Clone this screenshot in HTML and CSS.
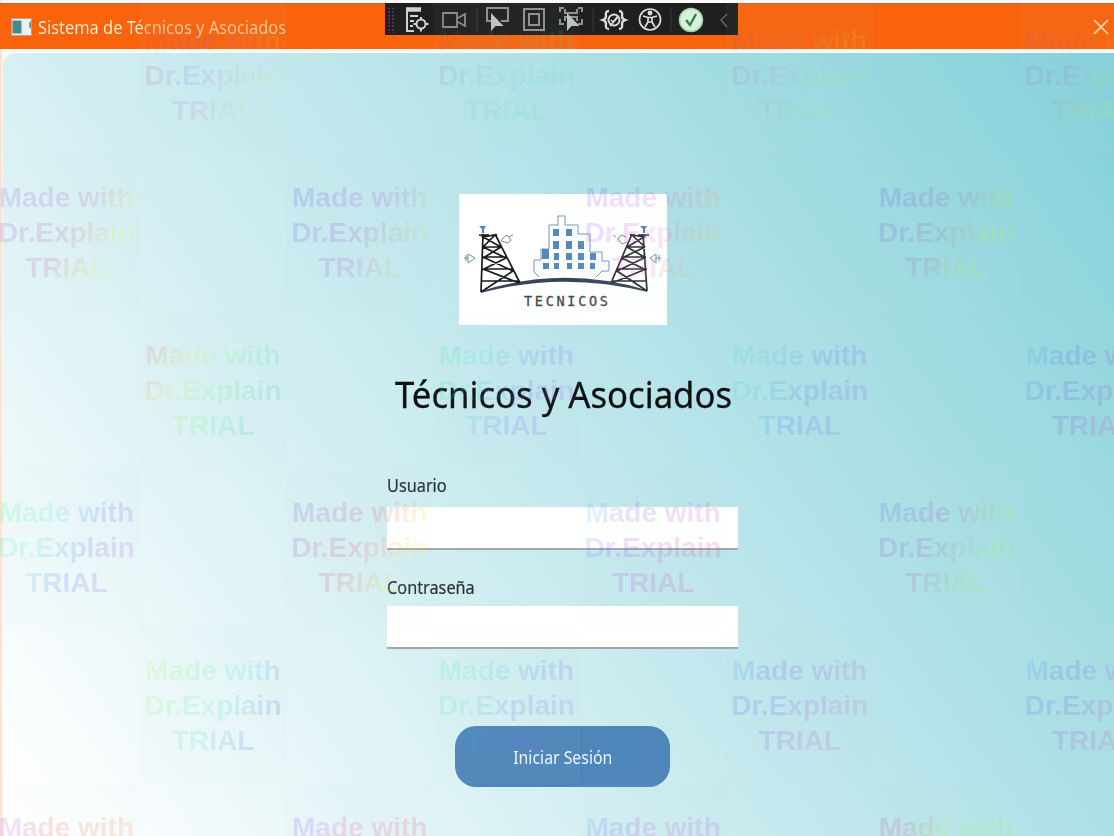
FILE: index.html
```html
<!DOCTYPE html>
<html lang="es">
<head>
<meta charset="utf-8">
<title>Sistema de Técnicos y Asociados</title>
<link rel="stylesheet" href="styles.css">
</head>
<body>
<div class="window">
  <header class="titlebar">
    <svg class="app-icon" width="21" height="18" viewBox="0 0 21 18">
      <rect x=".5" y=".5" width="20" height="17" fill="#eaf1f3" stroke="#b9a08c"/>
      <rect x="2" y="3" width="8" height="12" fill="#3d8f86" stroke="#6c7f8c"/>
      <path d="M20 3l-2 2v4l2 2z" fill="#5aa38c"/>
    </svg>
    <span class="title">Sistema de Técnicos y Asociados</span>
    <svg class="close" width="16" height="16" viewBox="0 0 16 16"><path d="M1 1l14 14M15 1L1 15" stroke="#ffdcb8" stroke-width="1.7"/></svg>
  </header>
  <main class="login">
    <svg class="logo" width="208" height="131" viewBox="0 0 208 131" fill="none">
      <rect width="208" height="131" fill="#fff"/>
      <path d="M80 83l-5-5V66h7V55h8V31h9V22h7v9h13v9h12v18h12v9h7v10h-7l-6 6" fill="#fbfdff" stroke="#7596c0"/>
      <g fill="#5588bb">
        <path d="M94 35h6v7h-6zM107 35h6v7h-6zM94 47h6v8h-6zM107 47h6v8h-6zM119 47h6v8h-6zM83 55h7v10h-7zM95 59h5v7h-5zM107 59h6v7h-6zM119 59h6v7h-6zM131 59h6v7h-6zM84 69h6v6h-6zM95 69h5v6h-5zM108 69h5v6h-5zM119 69h6v6h-6zM131 69h5v6h-5z"/>
      </g>
      <path d="M22 98Q104 72 188 97Q104 76 22 98z" fill="#39445c" stroke="#39445c" stroke-width="1.8"/>
      <g stroke="#17191d" stroke-width="1.7">
        <path d="M24 40L22 98M36 40L61 89M20 41h10M33 41h5M24 53h18M24 63h23M24 75h30M22 87h38M24 53L36 41L24 43L42 53L24 64M24 53l23 11L23 76M24 63l30 14L22 98M24 75l36 14"/>
        <path d="M184 40l4 57M173 40L152 89M179 41h11M171 41h5M168 53h18M163 63h24M158 75h30M154 87h34M186 53L173 41L185 43L168 53L187 64M186 53l-23 11 24 12M187 63l-29 14 30 20M187 75l-34 14" stroke="#2c2f33"/>
      </g>
      <g fill="#4d83b3"><path d="M20 32h7l-2 3v4h-2v-4zM181 32h7l-2 3v4h-2v-4z"/></g>
      <g stroke="#72909f"><path d="M44 44l4-3 4 5-3 3-7-2zM50 43l4-2M9 60l7 4-7 5zM5 64h4M7 61v6M167 43l-5-2-3 4 4 5 5-2M157 43l-3-2M197 60l-6 4 6 5zM197 64h5M200 61v6"/></g>
      <text class="logo-text" x="65" y="112" textLength="84">TECNICOS</text>
    </svg>
    <h1 class="heading"><span>Técnicos y Asociados</span></h1>
    <form class="form">
      <label class="label" for="user"><span>Usuario</span></label>
      <input class="field" id="user" type="text">
      <label class="label second" for="pass"><span>Contraseña</span></label>
      <input class="field" id="pass" type="password">
      <button class="submit" type="button"><span>Iniciar Sesión</span></button>
    </form>
  </main>
</div>

<div class="toolbar">
  <svg width="353" height="32" viewBox="0 0 353 32" fill="none">
    <path d="M4 5v25M8 5v25" stroke="#484848" stroke-width="2" stroke-dasharray="1.5 2"/>
    <g stroke="#d2d2d2" stroke-width="2">
      <path d="M21 6.500h15" stroke-width="4.500"/>
      <path d="M22 8v20h7M25 13h8M25 18h4M25 23h3"/>
      <circle cx="36" cy="21" r="4.500"/><path d="M36 14v3M36 25v3.500M28.500 21h3M40.500 21h3"/>
    </g>
    <g stroke="#898989" stroke-width="1.800"><path d="M58 10h14v14H58zM73 15l7-4v12l-7-4"/></g>
    <path d="M92 6v22M208 6v22M286 6v22" stroke="#3a3a3a"/>
    <g stroke="#8e8e8e" stroke-width="2">
      <path d="M107 18h-5V5h21v13h-7"/><path d="M106 10v18l4.500-5h8z" fill="#c2c2c2" stroke="none"/>
      <path d="M139 6h20v21h-20zM144 11h10v11h-10z"/>
      <path d="M175 9V5h4M193 5h4v4M175 16v5h4M197 16v5h-4M180 6v4h12V6M180 18v-4h12v4"/><path d="M182 10v18l4.500-5h8z" fill="#c2c2c2" stroke="none"/>
    </g>
    <g stroke="#dadada" stroke-width="2.400">
      <path d="M224 8q-4 0-3 5 0 3-3 4 3 1 3 4-1 5 3 5M234 8q4 0 3 5 0 3 3 4-3 1-3 4 1 5-3 5"/>
      <circle cx="229" cy="17" r="5.500" stroke-width="2"/><path d="M226 17l2 2 5-6M225 23l8-9" stroke-width="1.600"/>
    </g>
    <g stroke="#dedede" stroke-width="1.700"><circle cx="265" cy="16.500" r="10.500"/><circle cx="265" cy="10" r="1.600" fill="#dedede"/><path d="M258 13l5 1.500h4l5-1.500M263 14v5l-3 5M267 14v5l3 5M263 19h4"/></g>
    <circle cx="306" cy="17" r="11.500" fill="#d6f2da" stroke="#a5cfaa" stroke-width="1.500"/>
    <path d="M301 17l4 5 6-11" stroke="#347c42" stroke-width="2.300"/>
    <path d="M342 11l-6 6 6 7" stroke="#6c6c6c" stroke-width="1.300"/>
  </svg>
</div>

<div class="watermarks" id="marks"></div>
<script src="marks.js"></script>
</body>
</html>
```
FILE: styles.css
```css
* { box-sizing: border-box; }
body {
  margin: 0;
  width: 1114px;
  height: 836px;
  overflow: hidden;
  position: relative;
  font-family: "Noto Sans", "Open Sans", sans-serif;
  background: #fff;
}
.window {
  height: 836px;
  display: flex;
  flex-direction: column;
  padding-top: 3px;
  background: linear-gradient(90deg, #fddcc9 0, #fdf8f3 3px);
}
.titlebar {
  height: 46px;
  flex: none;
  display: flex;
  align-items: center;
  padding: 0 5px 0 11px;
  background: #f9630c;
  border-top: 1px solid #a3704f;
}
.title {
  margin-left: 6px;
  font-size: 17.5px;
  line-height: 24px;
  color: transparent;
  background: linear-gradient(90deg, #ffecd8 0, #ffecd8 108px, #ffc795 114px);
  -webkit-background-clip: text;
  background-clip: text;
  white-space: nowrap;
  transform: scaleX(.937);
  transform-origin: left;
}
.close { margin-left: auto; }
.login {
  flex: 1;
  margin: 4px 0 0 3px;
  border-radius: 14px 0 0 0;
  padding: 141px 0 0 384px;
  background: linear-gradient(54.5deg, #fff 0%, #fdfefe 4%, #bfe7ec 52%, #86d1da 98%);
}
.logo { display: block; margin-left: 72px; }
.logo-text {
  font: 13.5px "DejaVu Sans Mono", monospace;
  fill: #454b52;
  stroke: #454b52;
  stroke-width: .3px;
}
.heading {
  margin: 44px 0 0 8px;
  font-size: 36px;
  line-height: 52px;
  font-weight: 400;
  color: #0c1011;
  white-space: nowrap;
}
.heading span, .label span {
  display: inline-block;
  transform: scaleX(.963);
  transform-origin: left;
}
.heading span { -webkit-text-stroke: .3px #0c1011; }
.form {
  display: flex;
  flex-direction: column;
  width: 351px;
  margin-top: 51px;
}
.label {
  height: 35px;
  font-size: 17.5px;
  line-height: 26px;
  color: #283235;
}
.label span { transform: scaleX(.93); -webkit-text-stroke: .2px #283235; }
.second { margin-top: 24px; height: 32px; }
.field {
  height: 43px;
  padding: 0 8px;
  border: 0;
  border-bottom: 2px solid #a6a5ab;
  border-radius: 0;
  background: #fff;
  outline: 0;
}
.submit {
  width: 215px;
  height: 61px;
  margin: 77px 0 0 68px;
  padding: 1px 0 0;
  border: 0;
  border-radius: 21px;
  background: #4e86b9;
  color: #eef5fa;
  font: 17.5px "Noto Sans", sans-serif;
}
.submit span { display: inline-block; transform: scaleX(.905); }
.toolbar {
  position: absolute;
  left: 385px;
  top: 3px;
  width: 353px;
  height: 32px;
  background: #1f1f1f;
}
.toolbar svg { display: block; }
.watermarks {
  position: absolute;
  inset: -4px 0 0 -7px;
  overflow: hidden;
  pointer-events: none;
}
.mark-row {
  display: flex;
  gap: 146.7px;
  height: 157.4px;
}
.mark-row.shifted { padding-left: 146.7px; }
.mark {
  flex: none;
  width: 146.7px;
  height: 157.4px;
  padding-top: 27px;
  background: rgba(190, 225, 225, .035);
}
.mark-text {
  display: block;
  font: bold 28px/35px "Liberation Sans", Arial, sans-serif;
  text-align: center;
  white-space: nowrap;
  color: transparent;
  -webkit-background-clip: text;
  background-clip: text;
  opacity: .16;
  filter: blur(.5px);
}
.mark-row:first-child .mark-text { opacity: .12; }
```
FILE: marks.js
```js
// Rainbow colour stops per mark, one list for each row of the tiling.
const rows = [
  [["#f22 10%", "#75f 35%", "#b6c 50%", "#df6 80%"], ["#a44", "#6c9 40%", "#4ea"], ["#b38", "#b7b 35%", "#9e6 60%", "#af6"], ["#a5b", "#b58 35%", "#bf4 60%"]],
  [["#65f", "#c4a 50%", "#df4 75%"], ["#44f", "#a4c 50%", "#cd6 80%"], ["#53f", "#e4d 45%", "#fc3 85%"], ["#54f", "#a59 45%", "#bf3 70%"]],
  [["#e36", "#cf4 30%", "#3e9 65%", "#46e"], ["#3e7", "#3ec 30%", "#66f 60%", "#d5e"], ["#3e8", "#3dd 25%", "#46f 55%", "#c4c"], ["#3de", "#45e 30%", "#c4a 70%"]],
  [["#4f6", "#3ed 35%", "#55e 60%", "#e4c"], ["#64f", "#e46 50%", "#fe3 75%"], ["#3ef", "#84f 30%", "#f46"], ["#45f", "#a4b 40%", "#9f4 70%"]],
  [["#ef3", "#6f6 25%", "#3ec 55%", "#44e 85%"], ["#4f6", "#3ec 30%", "#57e 55%", "#c4e"], ["#3cf", "#45f 25%", "#b4d 55%", "#d85"], ["#3cf", "#45f 25%", "#b4d 55%", "#d85"]],
  [["#64f", "#c4f 15%", "#e45 30%", "#fb3"], ["#54f", "#a4f 20%", "#e48 35%", "#e54"], ["#3ec", "#64e 20%", "#c4d 40%"], ["#b4b", "#c47 20%", "#af4 40%"]]
];
const host = document.getElementById("marks");
rows.forEach((colors, i) => {
  const row = document.createElement("div");
  row.className = "mark-row" + (i % 2 ? "" : " shifted");
  colors.forEach(stops => {
    const mark = document.createElement("div");
    mark.className = "mark";
    const text = document.createElement("span");
    text.className = "mark-text";
    text.innerHTML = "Made with<br>Dr.Explain<br>TRIAL";
    text.style.backgroundImage = "linear-gradient(120deg," + stops.join(",") + ")";
    mark.append(text);
    row.append(mark);
  });
  host.append(row);
});
```
